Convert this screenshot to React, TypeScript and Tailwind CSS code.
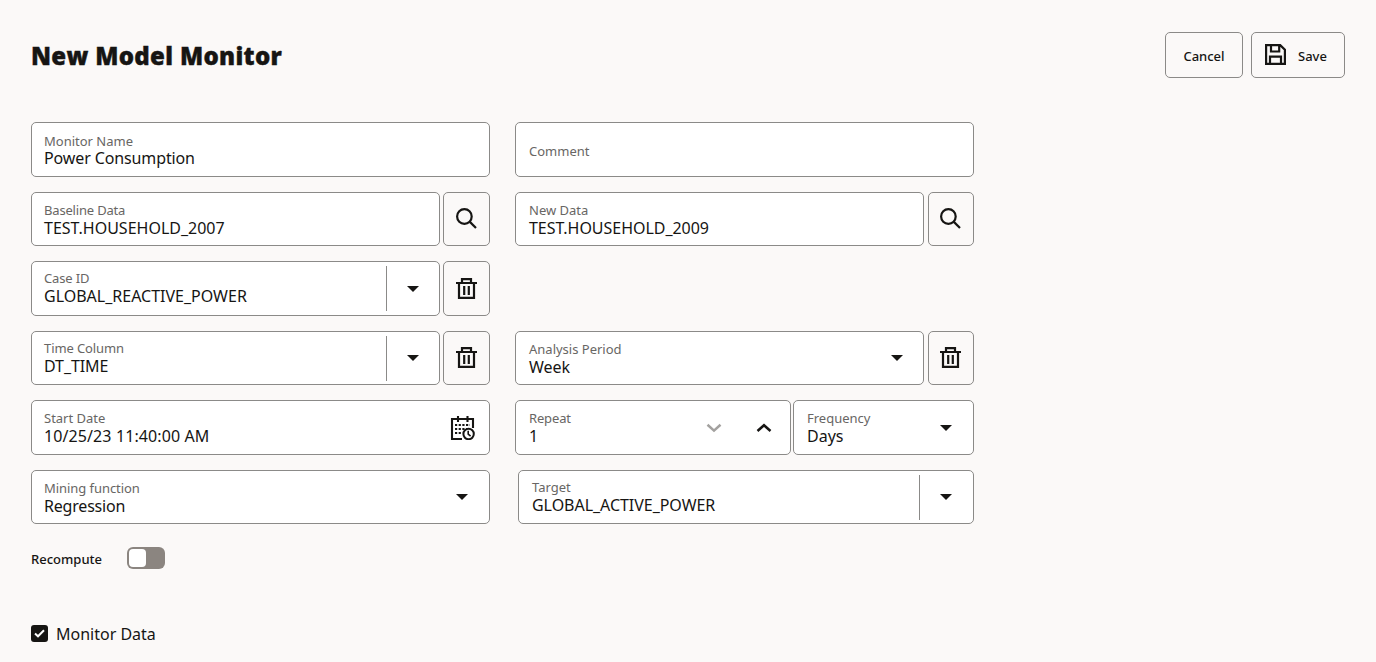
import { ReactNode, useState } from "react";

const BOX = "flex rounded-[5px] border border-[#8b8a88]";

function Caret() {
  return (
    <svg width="12" height="6" viewBox="0 0 12 6" fill="#161513">
      <path d="M0 0H12L6 6Z" />
    </svg>
  );
}

function SearchIcon() {
  return (
    <svg width="21" height="21" viewBox="0 0 21 21" fill="none" stroke="#161513" strokeWidth="2.2">
      <circle cx="8.4" cy="8.5" r="7.3" />
      <path d="M13.6 13.6L20 20" />
    </svg>
  );
}

function TrashIcon() {
  return (
    <svg width="21" height="21" viewBox="0 0 21 21" fill="none" stroke="#161513" strokeWidth="2.2">
      <path d="M0 5H21M6 5V1.1H15V5M3 5V19.9H18V5M8.2 8V17M12.8 8V17" />
    </svg>
  );
}

function SaveIcon() {
  return (
    <svg width="21" height="21" viewBox="0 0 21 21" fill="none" stroke="#161513" strokeWidth="2.2">
      <path d="M1.1 1.1H15.2L19.9 5.8V19.9H1.1ZM6 1V7.5H14.2V1M5 20V12.7H16V20" />
    </svg>
  );
}

function CalendarClockIcon() {
  return (
    <svg width="26" height="25" viewBox="0 0 26 25" fill="none" stroke="#161513" strokeWidth="2">
      <path d="M12 24H2V4H23V13M8 1V7M17.5 1V7" strokeWidth="2.1" />
      <path d="M5 10H20M5 14H17M5 18H12" strokeDasharray="2.2 1.47" strokeWidth="2.2" />
      <circle cx="18.6" cy="19" r="5.2" />
      <path d="M18.2 15.8V19.2L20.6 21.2" strokeWidth="1.6" />
    </svg>
  );
}

function Chevron({ up }: { up?: boolean }) {
  return (
    <svg width="16" height="10" viewBox="0 0 16 10" fill="none" strokeWidth="2.5">
      {up ? <path d="M1.5 8L8 2.2L14.5 8" stroke="#161513" /> : <path d="M1.5 1.8L8 7.6L14.5 1.8" stroke="#a3a19f" />}
    </svg>
  );
}

type FieldProps = {
  label: string;
  value: string;
  size: string;
  pad?: string;
  labelFit?: string;
  valueFit?: string;
  children?: ReactNode;
};

function Field({ label, value, size, pad = "pt-2", labelFit = "leading-[18px]", valueFit = "", children }: FieldProps) {
  return (
    <div className={`${BOX} ${size} justify-between bg-white`}>
      <div className={`flex flex-col pl-3 whitespace-nowrap ${pad}`}>
        <span className={`text-[13px] text-[#686664] ${labelFit}`}>{label}</span>
        <span className={`text-base leading-[18px] ${valueFit}`}>{value}</span>
      </div>
      {children}
    </div>
  );
}

function SplitCaret({ width = "w-[52px] pb-px" }: { width?: string }) {
  return (
    <div className="flex items-center">
      <div className="h-[45px] w-px bg-[#8b8a88]" />
      <div className={`flex justify-center ${width}`}>
        <Caret />
      </div>
    </div>
  );
}

function OpenCaret({ width = "w-[54px] pb-px" }: { width?: string }) {
  return (
    <div className={`flex items-center justify-center ${width}`}>
      <Caret />
    </div>
  );
}

function IconButton({ size, children }: { size: string; children: ReactNode }) {
  return <button className={`${BOX} ${size} items-center justify-center`}>{children}</button>;
}

export default function App() {
  const [recompute, setRecompute] = useState(false);
  const [monitorData, setMonitorData] = useState(true);

  return (
    <div className="h-[662px] w-[1376px] overflow-hidden bg-[#fbf9f8] pt-8 pr-[31px] pl-[31px] font-['Noto_Sans','Open_Sans',sans-serif] text-[#161513]">
      <header className="flex h-[46px] items-start justify-between">
        <h1 className="pt-[6px] font-['Open_Sans','Noto_Sans',sans-serif] text-[24px] leading-9 font-extrabold tracking-[0.32px] whitespace-nowrap [-webkit-text-stroke:0.4px_#161513]">
          New Model Monitor
        </h1>
        <div className="flex gap-2">
          <button className={`${BOX} h-[46px] w-[78px] items-center justify-center text-[13px] font-medium`}>
            <span className="pt-1">Cancel</span>
          </button>
          <button className={`${BOX} h-[46px] w-[94px] items-center pl-[13px] text-[13px] font-medium`}>
            <span className="pb-px"><SaveIcon /></span>
            <span className="pt-1 pl-3">Save</span>
          </button>
        </div>
      </header>

      <main className="flex flex-col gap-[15px] pt-11">
        <div className="flex gap-[25px]">
          <Field label="Monitor Name" value="Power Consumption" size="h-[55px] w-[459px]" pad="pt-[10px]" labelFit="leading-[16px]" valueFit="tracking-[-0.12px]" />
          <div className={`${BOX} h-[55px] w-[459px] items-center bg-white pt-1 pl-[13px] text-[13px] text-[#686664]`}>Comment</div>
        </div>

        <div className="flex gap-[25px]">
          <div className="flex gap-[3px]">
            <Field label="Baseline Data" value="TEST.HOUSEHOLD_2007" size="h-[54px] w-[409px]" labelFit="leading-[18px] tracking-[-0.18px]" />
            <IconButton size="h-[54px] w-[47px] pb-px"><SearchIcon /></IconButton>
          </div>
          <div className="flex gap-1">
            <Field label="New Data" value="TEST.HOUSEHOLD_2009" size="h-[54px] w-[409px]" pad="pt-2 pl-[13px]" valueFit="tracking-[-0.04px]" />
            <IconButton size="h-[54px] w-[46px] pr-px pb-px"><SearchIcon /></IconButton>
          </div>
        </div>

        <div className="flex gap-[3px]">
          <Field label="Case ID" value="GLOBAL_REACTIVE_POWER" size="h-[55px] w-[409px]" pad="pt-[7px]" labelFit="leading-[18px] tracking-[-0.15px]">
            <SplitCaret width="w-[52px] pt-px" />
          </Field>
          <IconButton size="h-[55px] w-[47px]"><TrashIcon /></IconButton>
        </div>

        <div className="flex gap-[25px]">
          <div className="flex gap-[3px]">
            <Field label="Time Column" value="DT_TIME" size="h-[54px] w-[409px]" pad="pt-[7px]" labelFit="leading-[18px] tracking-[-0.1px]" valueFit="tracking-[-0.1px]">
              <SplitCaret />
            </Field>
            <IconButton size="h-[54px] w-[47px] pb-px"><TrashIcon /></IconButton>
          </div>
          <div className="flex gap-1">
            <Field label="Analysis Period" value="Week" size="h-[54px] w-[409px]" pad="pt-2 pl-[13px]">
              <OpenCaret width="w-[52px] pb-px" />
            </Field>
            <IconButton size="h-[54px] w-[46px] pr-px pb-px"><TrashIcon /></IconButton>
          </div>
        </div>

        <div className="flex gap-[25px]">
          <Field label="Start Date" value="10/25/23 11:40:00 AM" size="h-[55px] w-[459px]" valueFit="tracking-[0.1px]">
            <div className="flex items-center pr-[13px]"><CalendarClockIcon /></div>
          </Field>
          <div className="flex gap-0.5">
            <Field label="Repeat" value="1" size="h-[55px] w-[276px]" pad="pt-2 pl-[13px]" labelFit="leading-[18px] tracking-[-0.15px]">
              <div className="flex items-center gap-[34px] pr-[18px]">
                <Chevron />
                <Chevron up />
              </div>
            </Field>
            <Field label="Frequency" value="Days" size="h-[55px] w-[181px]" pad="pt-2 pl-[13px]">
              <OpenCaret width="w-[54px]" />
            </Field>
          </div>
        </div>

        <div className="flex gap-7">
          <Field label="Mining function" value="Regression" size="h-[54px] w-[459px]" labelFit="leading-[18px] tracking-[-0.06px]" valueFit="tracking-[-0.2px]">
            <OpenCaret />
          </Field>
          <Field label="Target" value="GLOBAL_ACTIVE_POWER" size="h-[54px] w-[456px]" pad="pt-[7px] pl-[13px]" valueFit="tracking-[-0.04px]">
            <SplitCaret width="w-[53px] pr-px pb-px" />
          </Field>
        </div>
      </main>

      <div className="mt-[23px] flex h-[22px] items-center text-[13px] font-medium">
        <span className="w-24 pt-[3px]">Recompute</span>
        <button
          role="switch"
          aria-checked={recompute}
          onClick={() => setRecompute(!recompute)}
          className={`flex h-[22px] w-[38px] items-center rounded-md bg-[#8b8580] px-0.5 ${recompute ? "justify-end" : ""}`}
        >
          <span className="h-[18px] w-[17px] rounded-[4px] bg-white" />
        </button>
      </div>

      <div className="mt-[52px] flex h-[25px] items-center gap-2">
        <button
          role="checkbox"
          aria-checked={monitorData}
          onClick={() => setMonitorData(!monitorData)}
          className="flex h-[17px] w-[17px] items-center justify-center rounded-[3px] bg-[#161513]"
        >
          {monitorData && (
            <svg width="11" height="9" viewBox="0 0 11 9" fill="none" stroke="#fff" strokeWidth="2">
              <path d="M1 4.5L4 7.3L10 1.2" />
            </svg>
          )}
        </button>
        <span className="text-base leading-6">Monitor Data</span>
      </div>
    </div>
  );
}
